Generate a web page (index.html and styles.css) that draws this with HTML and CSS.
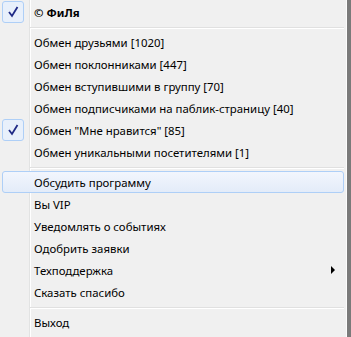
FILE: index.html
```html
<!DOCTYPE html>
<html lang="ru">
<head>
  <meta charset="UTF-8">
  <title>Меню</title>
  <link rel="stylesheet" href="styles.css">
</head>
<body>
  <div class="menu">
    <div class="item head">
      <span class="gutter"><span class="check"><svg width="20" height="20" viewBox="0 0 20 20"><path d="M6 10 L9 14 L14.5 5" fill="none" stroke="#1f2a86" stroke-width="1.8"/></svg></span></span>
      <span class="label">© ФиЛя</span>
    </div>
    <div class="sep"></div>
    <div class="item"><span class="gutter"></span><span class="label">Обмен друзьями [1020]</span></div>
    <div class="item"><span class="gutter"></span><span class="label">Обмен поклонниками [447]</span></div>
    <div class="item"><span class="gutter"></span><span class="label">Обмен вступившими в группу [70]</span></div>
    <div class="item"><span class="gutter"></span><span class="label">Обмен подписчиками на паблик-страницу [40]</span></div>
    <div class="item">
      <span class="gutter"><span class="check"><svg width="20" height="20" viewBox="0 0 20 20"><path d="M6 10 L9 14 L14.5 5" fill="none" stroke="#1f2a86" stroke-width="1.8"/></svg></span></span>
      <span class="label">Обмен "Мне нравится" [85]</span>
    </div>
    <div class="item"><span class="gutter"></span><span class="label">Обмен уникальными посетителями [1]</span></div>
    <div class="sep"></div>
    <div class="item hover"><span class="gutter"></span><span class="label">Обсудить программу</span></div>
    <div class="item"><span class="gutter"></span><span class="label">Вы VIP</span></div>
    <div class="item"><span class="gutter"></span><span class="label">Уведомлять о событиях</span></div>
    <div class="item"><span class="gutter"></span><span class="label">Одобрить заявки</span></div>
    <div class="item"><span class="gutter"></span><span class="label">Техподдержка</span><span class="arrow"></span></div>
    <div class="item"><span class="gutter"></span><span class="label">Сказать спасибо</span></div>
    <div class="sep"></div>
    <div class="item"><span class="gutter"></span><span class="label">Выход</span></div>
  </div>
</body>
</html>
```

FILE: styles.css
```css
body {
  margin: 0;
  padding: 0;
  background-color: #7a7a7a;
  font-family: "Noto Sans", "Open Sans", sans-serif;
  font-size: 11.4px;
  color: #000;
}

.menu {
  width: 347px;
  height: 337px;
  padding-top: 1px;
  box-sizing: border-box;
  border-right: 1px solid #fcfcfc;
  background-color: #f0f0f0;
  /* gutter line */
  background-image: linear-gradient(to right,
    transparent 29px, #e2e3e3 29px, #e2e3e3 30px,
    #ffffff 30px, #ffffff 31px, transparent 31px);
  display: flex;
  flex-direction: column;
}

.item {
  height: 22px;
  margin: 0 2px;
  display: flex;
  align-items: center;
  border: 1px solid transparent;
  border-radius: 3px;
  box-sizing: border-box;
}

.item.hover {
  border-color: #aecff7;
  background: linear-gradient(#f2f6fd, #e3ecf9);
}

.gutter {
  width: 26px;
  height: 22px;
  margin-left: -1px;
  flex: none;
  display: flex;
  align-items: center;
}

.check {
  width: 20px;
  height: 20px;
  border: 1px solid #aecff7;
  border-radius: 3px;
  background-color: #e8f0fb;
  display: flex;
}

.label {
  margin-left: 6px;
  white-space: nowrap;
}

.head .label {
  font-weight: bold;
}

.arrow {
  margin-left: auto;
  margin-right: 8px;
  width: 0;
  height: 0;
  border-top: 4px solid transparent;
  border-bottom: 4px solid transparent;
  border-left: 4px solid #000;
}

.sep {
  height: 0;
  margin: 4px 2px 2px 30px;
  border-top: 1px solid #e0e0e0;
  border-bottom: 1px solid #ffffff;
}
```
